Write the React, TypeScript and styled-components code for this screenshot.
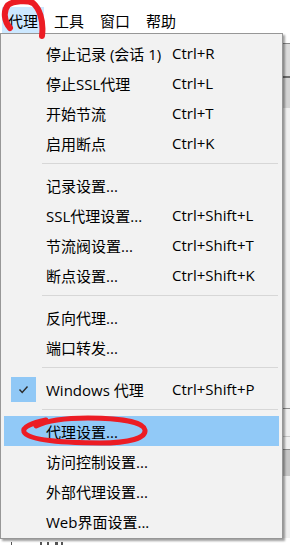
import React from "react";
import styled, { createGlobalStyle } from "styled-components";

const Global = createGlobalStyle`
  html, body { margin: 0; padding: 0; background: #fff; }
  body {
    font-family: "Open Sans", "Noto Sans CJK SC", sans-serif;
    -webkit-font-smoothing: none;
  }
`;

const Window = styled.div`
  position: relative;
  width: 290px;
  height: 547px;
  overflow: hidden;
  background: #fff;
  display: flex;
  flex-direction: column;
`;

const MenuBar = styled.div`
  height: 33px;
  flex: none;
  display: flex;
  align-items: flex-end;
  gap: 4px;
  padding-left: 2px;
  background: #fff;
`;

const BarItem = styled.div<{ $open?: boolean }>`
  height: 26px;
  padding: 0 6px;
  display: flex;
  align-items: center;
  font-size: 15px;
  color: #000;
  background: ${(p) => (p.$open ? "#cce8ff" : "transparent")};
`;

const Workspace = styled.div`
  flex: 1;
  display: flex;
  flex-direction: column;
  background: #f0f0f0;
`;

const PaneTop = styled.div`
  height: 10px;
  background: #fff;
`;

const PaneHeader = styled.div`
  height: 32px;
  background: #dcdcdc;
  border-top: 1px solid #8a8a8a;
  border-bottom: 2px solid #6e6e6e;
`;

const PaneScroll = styled.div`
  height: 30px;
  background: #d4d4d4;
`;

const PaneBody = styled.div`
  flex: 1;
  display: flex;
  flex-direction: column;
  background: #f0f0f0;
`;

const PaneRule = styled.div<{ $h: number; $dark?: boolean }>`
  height: ${(p) => p.$h}px;
  border-bottom: 1px solid ${(p) => (p.$dark ? "#8c8c8c" : "#c8c8c8")};
`;

const Thumb = styled.div`
  height: 26px;
  background: #c6c6c6;
`;

const Footer = styled.div`
  margin-top: auto;
  height: 9px;
  background: #fff;
  display: flex;
  align-items: flex-start;
  padding: 4px 0 0 11px;
  box-sizing: border-box;
  gap: 0;
`;

/* tops of glyphs from the list row hidden under the menu */
const Tick = styled.span<{ $ml: number; $w?: number }>`
  display: block;
  margin-left: ${(p) => p.$ml}px;
  width: ${(p) => p.$w ?? 1}px;
  height: 3px;
  background: #555;
`;

const Menu = styled.div`
  position: absolute;
  top: 33px;
  left: 0;
  width: 283px;
  box-sizing: border-box;
  background: #f2f2f2;
  border: 1px solid #979797;
  padding: 4px 0 2px;
  box-shadow: 2px 2px 2px rgba(0, 0, 0, 0.38);
  display: flex;
  flex-direction: column;
  z-index: 5;
`;

const Item = styled.div<{ $active?: boolean }>`
  height: 30px;
  margin: 0 3px;
  display: grid;
  grid-template-columns: 42px 126px 1fr;
  align-items: center;
  font-size: 15px;
  color: #000;
  white-space: nowrap;
  background: ${(p) => (p.$active ? "#91c9f7" : "transparent")};
`;

const Gutter = styled.div`
  display: flex;
  align-items: center;
  padding-left: 7px;
`;

const CheckBox = styled.div`
  width: 25px;
  height: 25px;
  background: #90c8f6;
  display: flex;
  align-items: center;
  justify-content: center;
`;

const Label = styled.span``;

const Shortcut = styled.span``;

const Separator = styled.div`
  height: 12px;
  display: flex;
  align-items: flex-start;
  padding: 5px 4px 0 41px;
  box-sizing: border-box;
  &::after {
    content: "";
    flex: 1;
    height: 1px;
    background: #d7d7d7;
  }
`;

const Annotation = styled.svg`
  position: absolute;
  inset: 0;
  pointer-events: none;
  z-index: 10;
`;

type Entry =
  | { label: string; shortcut?: string; checked?: boolean; active?: boolean }
  | "sep";

const entries: Entry[] = [
  { label: "停止记录 (会话 1)", shortcut: "Ctrl+R" },
  { label: "停止SSL代理", shortcut: "Ctrl+L" },
  { label: "开始节流", shortcut: "Ctrl+T" },
  { label: "启用断点", shortcut: "Ctrl+K" },
  "sep",
  { label: "记录设置..." },
  { label: "SSL代理设置...", shortcut: "Ctrl+Shift+L" },
  { label: "节流阀设置...", shortcut: "Ctrl+Shift+T" },
  { label: "断点设置...", shortcut: "Ctrl+Shift+K" },
  "sep",
  { label: "反向代理..." },
  { label: "端口转发..." },
  "sep",
  { label: "Windows 代理", shortcut: "Ctrl+Shift+P", checked: true },
  "sep",
  { label: "代理设置...", active: true },
  { label: "访问控制设置..." },
  { label: "外部代理设置..." },
  { label: "Web界面设置..." },
];

const Check = () => (
  <svg width="25" height="25" viewBox="0 0 25 25">
    <polyline
      points="8.5,12.5 11.2,15.5 16.5,9.5"
      fill="none"
      stroke="#2b2b2b"
      strokeWidth="1.4"
    />
  </svg>
);

export default function App() {
  return (
    <>
      <Global />
      <Window>
        <MenuBar>
          <BarItem $open>代理</BarItem>
          <BarItem>工具</BarItem>
          <BarItem>窗口</BarItem>
          <BarItem>帮助</BarItem>
        </MenuBar>
        <Workspace>
          <PaneTop />
          <PaneHeader />
          <PaneScroll />
          <PaneBody>
            <PaneRule $h={300} $dark />
            <PaneRule $h={27} />
            <PaneRule $h={12} $dark />
            <Thumb />
          </PaneBody>
          <Footer>
            <Tick $ml={0} />
            <Tick $ml={28} $w={2} />
            <Tick $ml={5} $w={2} />
            <Tick $ml={6} $w={3} />
            <Tick $ml={3} $w={2} />
          </Footer>
        </Workspace>

        <Menu>
          {entries.map((e, i) =>
            e === "sep" ? (
              <Separator key={i} />
            ) : (
              <Item key={i} $active={e.active}>
                <Gutter>
                  {e.checked && (
                    <CheckBox>
                      <Check />
                    </CheckBox>
                  )}
                </Gutter>
                <Label>{e.label}</Label>
                <Shortcut>{e.shortcut}</Shortcut>
              </Item>
            )
          )}
        </Menu>

        {/* red hand-drawn marks from the original screenshot */}
        <Annotation width="290" height="547" viewBox="0 0 290 547">
          <path
            d="M 10 28 C 4 21, 3 11, 8 5 C 13 1, 27 0, 33 3 C 39 8, 44 20, 42 36"
            fill="none"
            stroke="#ec1c24"
            strokeWidth="6"
            strokeLinecap="round"
          />
          <path
            d="M 46 420 C 32 423, 22 427, 24 432 C 28 440, 62 443, 100 443 C 130 443, 146 438, 145 430 C 144 422, 120 418, 88 418 C 66 418, 48 420, 36 426"
            fill="none"
            stroke="#ec1c24"
            strokeWidth="5"
            strokeLinecap="round"
          />
        </Annotation>
      </Window>
    </>
  );
}
